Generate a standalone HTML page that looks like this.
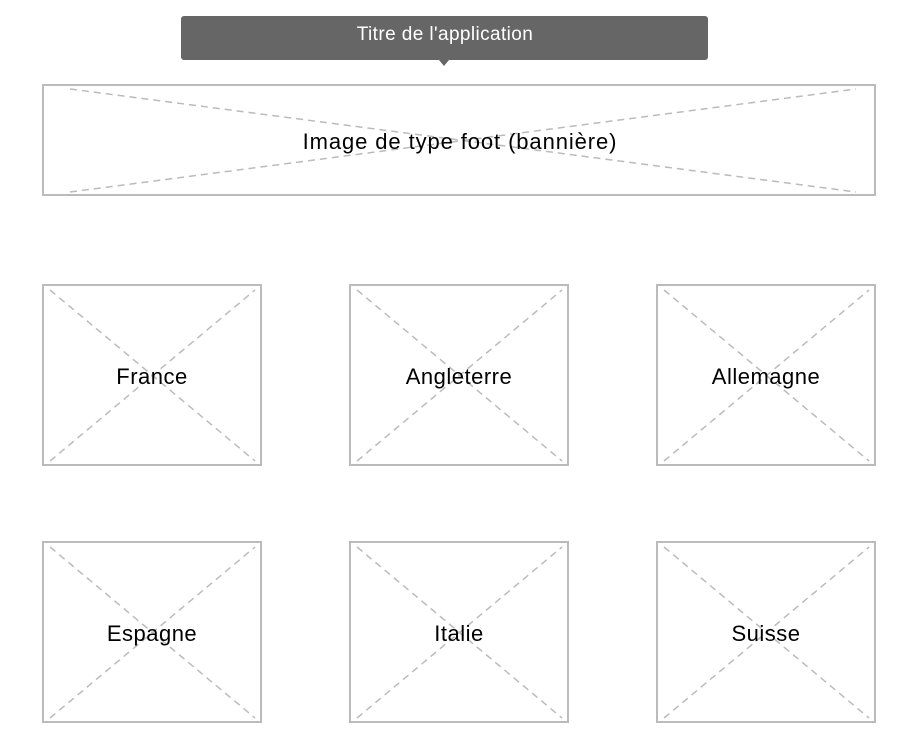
<!DOCTYPE html>
<html><head><meta charset="utf-8"><style>
html,body{margin:0;padding:0;background:#fff;width:913px;height:736px;overflow:hidden}
</style></head><body>
<svg width="913" height="736" xmlns="http://www.w3.org/2000/svg" font-family="Liberation Sans, Arial, sans-serif">
<rect x="181" y="16" width="527" height="44" rx="3" fill="#666"/>
<polygon points="439,60 449,60 444,66" fill="#666"/>
<text x="445" y="40" text-anchor="middle" fill="#fff" font-size="19" letter-spacing="0.4">Titre de l'application</text>
<g fill="none" stroke="#bbb">
<rect x="43" y="85" width="832" height="110" stroke-width="2"/>
<g stroke-dasharray="7,5" stroke-width="1.5"><line x1="70" y1="89" x2="856" y2="192"/><line x1="70" y1="192" x2="856" y2="89"/></g>
</g>
<text x="460" y="149" text-anchor="middle" font-size="22" letter-spacing="0.9" fill="#000">Image de type foot (bannière)</text>
<g fill="none" stroke="#bbb">
<g stroke-width="2">
<rect x="43" y="285" width="218" height="180"/><rect x="350" y="285" width="218" height="180"/><rect x="657" y="285" width="218" height="180"/>
<rect x="43" y="542" width="218" height="180"/><rect x="350" y="542" width="218" height="180"/><rect x="657" y="542" width="218" height="180"/>
</g>
<g stroke-dasharray="7,5" stroke-width="1.5">
<line x1="50" y1="290" x2="255" y2="461"/><line x1="50" y1="461" x2="255" y2="290"/>
<line x1="357" y1="290" x2="562" y2="461"/><line x1="357" y1="461" x2="562" y2="290"/>
<line x1="664" y1="290" x2="869" y2="461"/><line x1="664" y1="461" x2="869" y2="290"/>
<line x1="50" y1="547" x2="255" y2="718"/><line x1="50" y1="718" x2="255" y2="547"/>
<line x1="357" y1="547" x2="562" y2="718"/><line x1="357" y1="718" x2="562" y2="547"/>
<line x1="664" y1="547" x2="869" y2="718"/><line x1="664" y1="718" x2="869" y2="547"/>
</g>
</g>
<g font-size="22" letter-spacing="0.5" fill="#000" text-anchor="middle">
<text x="152" y="384">France</text><text x="459" y="384">Angleterre</text><text x="766" y="384">Allemagne</text>
<text x="152" y="641">Espagne</text><text x="459" y="641">Italie</text><text x="766" y="641">Suisse</text>
</g>
</svg>
</body></html>
